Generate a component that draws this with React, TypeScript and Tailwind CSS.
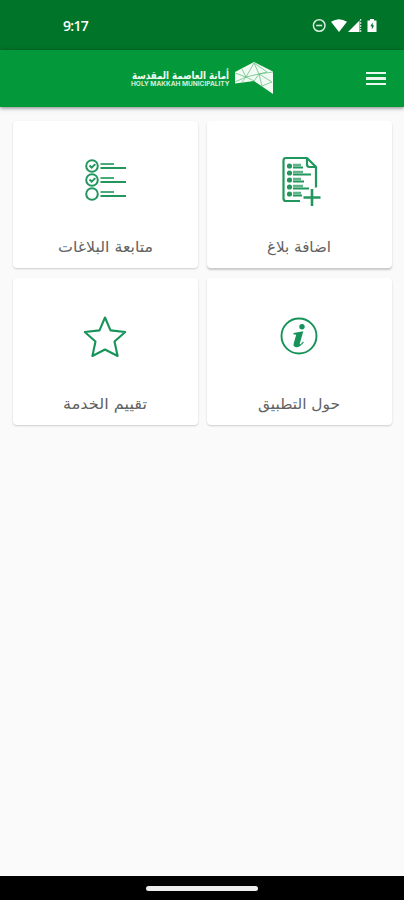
import React from "react";

function StatusBar() {
  return (
    <div className="flex h-[50px] items-center bg-[#007429] pl-[63px] pr-[26px] text-white">
      <span className="mt-px font-['Open_Sans',sans-serif] text-[14px] font-semibold leading-none tracking-[-0.7px]">9:17</span>
      <svg className="ml-auto" width="68" height="16" viewBox="0 0 68 16">
        <circle cx="9.200" cy="8.500" r="5.800" fill="none" stroke="#d5ecd9" strokeWidth="1.500" />
        <path d="M6.200 8.500h6" stroke="#d5ecd9" strokeWidth="1.600" />
        <path d="M21 4.800Q29 -0.500 37 4.800L29 15Z" fill="#fff" />
        <path d="M38 15L49.500 3.500V15Z" fill="#fff" />
        <path d="M50.600 2v10M50.600 13v2" stroke="#b9dcc1" strokeWidth="1.300" strokeDasharray="2 1" />
        <path d="M58 3.500h2V2h4v1.500h2.500V15h-9V3.500Z" fill="#fff" />
        <path d="M62.700 5.500L60.300 9.300h1.500v3L64.200 8.500h-1.500Z" fill="#007429" />
      </svg>
    </div>
  );
}

function Logo() {
  return (
    <svg width="144" height="36" viewBox="0 0 144 36" fill="#f1faf3">
      <text x="2" y="19" direction="ltr" textLength="97" lengthAdjust="spacingAndGlyphs" fontFamily="'DejaVu Sans', sans-serif" fontSize="10.500" fontWeight="700">أمانة العاصمة المقدسة</text>
      <text x="1" y="26" direction="ltr" textLength="98.500" lengthAdjust="spacingAndGlyphs" fontFamily="Inter, sans-serif" fontSize="6.200" fontWeight="700" fill="#d3efdb">HOLY MAKKAH MUNICIPALITY</text>
      <path d="M105 12L124 2L143 11.500V34L124 21L105 23.500Z" />
      <path d="M105 13L116 17L124 3L129 14L143 12M105 22L116 17L129 14L124 21M116 17L124 21M129 14L142 22L132 26M124 3L137 12L129 14L132 26M112 9L116 17L112 22" fill="none" stroke="#5abc79" strokeWidth="0.700" />
    </svg>
  );
}

function Header() {
  return (
    <header className="z-10 flex h-[57px] items-center justify-end bg-[#03993a] pr-[18px] shadow-[0_1px_4px_rgba(0,0,0,0.5)]">
      <div className="mb-[2px] mr-[92px]"><Logo /></div>
      <button aria-label="القائمة" className="flex w-5 flex-col gap-[3px]">
        <span className="h-[2.500px] bg-[#e9f8ec]" />
        <span className="h-[2.500px] bg-[#e9f8ec]" />
        <span className="h-[2.500px] bg-[#e9f8ec]" />
      </button>
    </header>
  );
}

function ListIcon() {
  return (
    <svg width="44" height="46" viewBox="0 0 44 46" fill="none" stroke="#22965c" strokeWidth="2">
      <circle cx="9" cy="10" r="5.800" />
      <circle cx="9" cy="24" r="5.800" />
      <circle cx="9" cy="38" r="5.800" />
      <path d="M6.500 9.500l2.200 2.200 3.600-3.600M6.500 23.500l2.200 2.200 3.600-3.600" />
      <path d="M17.500 8H31M17.500 22H31M17.500 36H31" stroke="#4baa79" />
      <path d="M17.500 12H43M17.500 26H43M17.500 40H43" />
    </svg>
  );
}

function AddReportIcon() {
  return (
    <svg className="mr-[-4px]" width="44" height="54" viewBox="0 0 44 54" fill="none" stroke="#22965c" strokeWidth="2.200">
      <path d="M21 49H7Q4.500 49 4.500 46.500V8.500Q4.500 6 7 6H28L37 15V35.500" />
      <path d="M28 6V12.500Q28 15 30.500 15H37" />
      <path d="M33 37V54M24.500 45.500H41.500" strokeWidth="2.600" />
      <g fill="#22965c" stroke="none">
        <circle cx="10.500" cy="14" r="2.600" />
        <circle cx="10.500" cy="21" r="2.600" />
        <circle cx="10.500" cy="28" r="2.600" />
        <circle cx="10.500" cy="35" r="2.600" />
        <circle cx="10.500" cy="42" r="2.600" />
      </g>
      <path d="M14 13H22M14 20H24M14 27H22M14 34H24M14 41H22" stroke="#60b489" strokeWidth="2.500" />
      <path d="M14 15.500H24M14 22.500H32M14 29.500H25M14 36.500H30M14 43.500H23" strokeWidth="1.800" />
    </svg>
  );
}

function InfoIcon() {
  return (
    <svg width="40" height="40" viewBox="0 0 40 40">
      <circle cx="20" cy="20" r="17.500" fill="none" stroke="#17935a" strokeWidth="1.900" />
      <circle cx="23" cy="10.800" r="2.700" fill="#17935a" />
      <path d="M14.500 17L24.300 15.200L20.800 27.400Q20.600 29 21.800 28L24 25.500L24.800 26.200Q21 31.500 17 31.200Q13.900 30.700 14.700 27.600L17.200 18.700L14.300 18.200Z" fill="#17935a" />
    </svg>
  );
}

function StarIcon() {
  return (
    <svg width="44" height="44" viewBox="0 0 44 44">
      <path d="M22 3.500L27.500 16.400L42.200 18L31.500 27.500L34.600 42L22 35.500L9.400 42L12.500 27.500L1.800 18L16.500 16.400Z" fill="none" stroke="#17935a" strokeWidth="2.100" strokeLinejoin="round" />
    </svg>
  );
}

interface CardProps {
  label: string;
  width: number;
  raised?: boolean;
  children: React.ReactNode;
}

function Card({ label, width, raised, children }: CardProps) {
  return (
    <button className={`flex h-[147px] flex-col items-center rounded-[4px] bg-white ${raised ? "shadow-[0_2px_2px_rgba(0,0,0,0.2)]" : "shadow-[0_1px_2px_rgba(0,0,0,0.18)]"}`}>
      <span className="mt-[28px] flex h-[60px] items-center justify-center">{children}</span>
      <svg className="mt-[25px] overflow-visible" width={width + 4} height="28" role="img" aria-label={label}>
        <text x="2" y="18" direction="ltr" textLength={width} lengthAdjust="spacingAndGlyphs" fontFamily="'DejaVu Sans', sans-serif" fontSize="15" fill="#626262">{label}</text>
      </svg>
    </button>
  );
}

export default function App() {
  return (
    <div className="flex h-[900px] w-[404px] flex-col overflow-hidden bg-[#fafafa]">
      <StatusBar />
      <Header />
      <main dir="rtl" className="grid flex-1 grid-cols-2 content-start gap-x-[9px] gap-y-[10px] px-[12.500px] pt-[13.500px]">
        <Card label="اضافة بلاغ" width={64} raised><AddReportIcon /></Card>
        <Card label="متابعة البلاغات" width={95}><ListIcon /></Card>
        <Card label="حول التطبيق" width={82}><InfoIcon /></Card>
        <Card label="تقييم الخدمة" width={84}><StarIcon /></Card>
      </main>
      <footer className="flex h-6 items-center justify-center bg-black">
        <span className="h-[5px] w-[112px] rounded-full bg-[#ededed]" />
      </footer>
    </div>
  );
}
